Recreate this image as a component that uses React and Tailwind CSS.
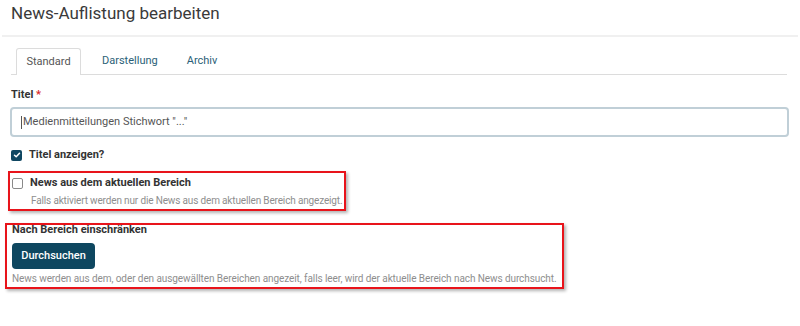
export default function App() {
  return (
    <div className="h-[326px] w-[800px] bg-white font-['Roboto',sans-serif] text-[#333]">
      {/* header */}
      <div className="mx-[2px] h-[37px] border-b-2 border-[#f0f0f0] pl-[9px] pt-[1px]">
        <h1 className="text-[17px] leading-[24px] text-[#3a3a3a]">News-Auflistung bearbeiten</h1>
      </div>

      <div className="pl-[11px] pr-[13px]">
        {/* tabs */}
        <div className="mt-[11px] flex border-b border-[#dcdcdc] pl-[5px]">
          <div className="-mb-px flex h-[27px] w-[65px] items-center justify-center rounded-t-[3px] border border-b-0 border-[#dcdcdc] bg-white text-[11px] text-[#555]">
            Standard
          </div>
          <div className="flex h-[26px] items-center pl-[21px] pr-[15px] text-[11px] text-[#2b5f78]">
            Darstellung
          </div>
          <div className="flex h-[26px] items-center pl-[14px] text-[11px] text-[#2b5f78]">Archiv</div>
        </div>

        {/* Titel */}
        <div className="mt-[12px] text-[11px] font-bold leading-[16px] text-[#333]">
          Titel <span className="text-[#d9262b]">*</span>
        </div>
        <div className="-ml-px mt-[4px] flex h-[30px] w-[779px] items-center rounded-[4px] border-2 border-[#c0cfd7] pl-[9px] text-[11px] text-[#555]">
          <span className="mr-px h-[13px] w-px bg-[#555]" />
          Medienmitteilungen Stichwort "..."
        </div>

        {/* Titel anzeigen */}
        <label className="mt-[11px] flex items-center gap-[7px]">
          <span className="flex h-[11px] w-[11px] items-center justify-center rounded-[2px] bg-[#0f4661]">
            <svg width="8" height="8" viewBox="0 0 8 8">
              <path d="M1.5 4.2 3.2 5.8 6.5 2.2" fill="none" stroke="white" strokeWidth="1.5" strokeLinecap="round" strokeLinejoin="round" />
            </svg>
          </span>
          <span className="text-[11px] font-bold leading-[14px] text-[#333]">Titel anzeigen?</span>
        </label>
      </div>

      {/* News aus dem aktuellen Bereich */}
      <div className="ml-[8px] mt-[9px] w-[338px] border-2 border-[#e8141b] pb-[1px] pl-[2px] pt-[3px] shadow-[2px_2px_3px_rgba(0,0,0,0.3)]">
        <label className="flex items-center gap-[7px]">
          <span className="h-[11px] w-[11px] rounded-[2px] border border-[#8a8a8a] bg-white" />
          <span className="text-[11px] font-bold leading-[14px] text-[#333]">News aus dem aktuellen Bereich</span>
        </label>
        <div className="mt-[4px] whitespace-nowrap pl-[19px] text-[10px] leading-[14px] tracking-[-0.15px] text-[#8e8e8e]">
          Falls aktiviert werden nur die News aus dem aktuellen Bereich angezeigt.
        </div>
      </div>

      {/* Nach Bereich einschränken */}
      <div className="ml-[5px] mt-[12px] w-[559px] border-2 border-[#e8141b] pl-[5px] shadow-[2px_2px_3px_rgba(0,0,0,0.3)]">
        <div className="text-[11px] font-bold leading-[10px] text-[#333]">Nach Bereich einschränken</div>
        <button className="mt-[8px] flex h-[26px] w-[83px] items-center justify-center rounded-[4px] bg-[#0e4760] text-[11px] font-medium text-white">
          Durchsuchen
        </button>
        <div className="mt-[3px] whitespace-nowrap pb-[1px] text-[10px] leading-[14px] tracking-[-0.08px] text-[#8e8e8e]">
          News werden aus dem, oder den ausgewällten Bereichen angezeit, falls leer, wird der aktuelle Bereich nach News durchsucht.
        </div>
      </div>
    </div>
  );
}
